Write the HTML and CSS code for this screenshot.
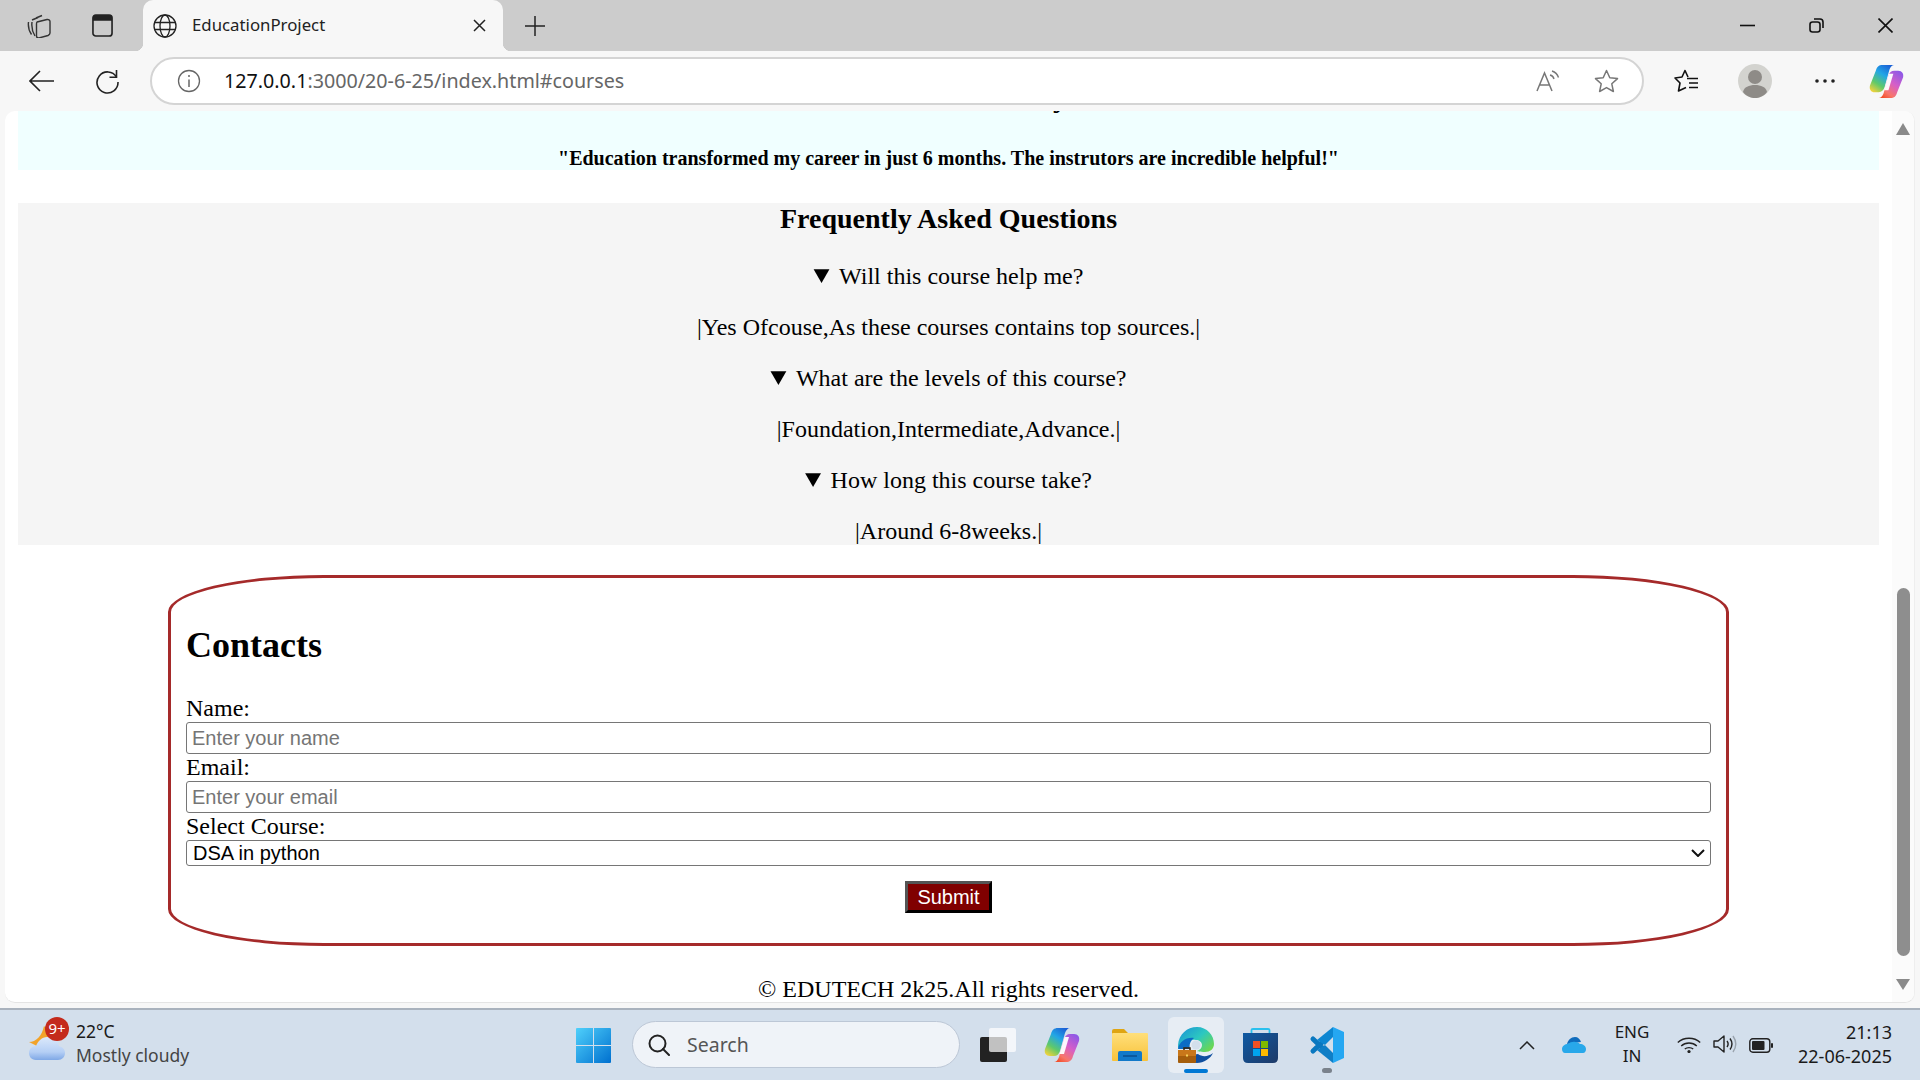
FILE: index.html
```html
<!DOCTYPE html>
<html lang="en">
<head>
<meta charset="utf-8">
<title>EducationProject</title>
<link rel="stylesheet" href="styles.css">
</head>
<body>
<svg class="defs" aria-hidden="true">
  <defs>
    <linearGradient id="cpA" x1="0.75" y1="0" x2="0.15" y2="1">
      <stop offset="0" stop-color="#1b62d6"/><stop offset="0.35" stop-color="#22a6e6"/><stop offset="0.7" stop-color="#5fc96a"/><stop offset="1" stop-color="#f2d23c"/>
    </linearGradient>
    <linearGradient id="cpB" x1="0.85" y1="0" x2="0.2" y2="1">
      <stop offset="0" stop-color="#8a58e8"/><stop offset="0.45" stop-color="#d65fc8"/><stop offset="0.8" stop-color="#f8766a"/><stop offset="1" stop-color="#f2502c"/>
    </linearGradient>
    <symbol id="copilot" viewBox="0 0 36 36">
      <path fill="url(#cpA)" d="M14 1H26C24 1 22 3 21 6L16 24C15 27 13 29 10 29H6C2 29 0 26 1 22L7 7C8 3 10 1 14 1Z"/>
      <path fill="url(#cpB)" d="M22 35H10C12 35 14 33 15 30L20 12C21 9 23 7 26 7H30C34 7 36 10 35 14L29 29C28 33 26 35 22 35Z"/>
      <path fill="#fff" d="M20.500 10H25L20 27H15.500Z" opacity=".95"/>
    </symbol>
  </defs>
</svg>

<header class="tabstrip">
  <svg class="ic ic-collections" viewBox="0 0 24 24" fill="none" stroke="#333" stroke-width="1.400"><path d="M9 4 15 1.500M5 6 11 3.500M1.500 8C1 12 2 17 4.500 20.500M5 8C4.500 12 5.500 18 8 22"/><path d="M10 8 20 5.500C21.500 5.200 23 6 23 7.500V19C23 20.500 22 21 21 21.500L12 24C10.500 24 9.500 23 9.500 22V10C9.500 9 9.500 8.300 10 8Z"/></svg>
  <svg class="ic ic-tabs" viewBox="0 0 22 24"><rect x="1" y="1" width="20" height="22" rx="3" fill="none" stroke="#222" stroke-width="1.700"/><path d="M1 4a3 3 0 0 1 3-3h14a3 3 0 0 1 3 3v3H1z" fill="#222"/></svg>
  <div class="tab">
    <svg class="ic ic-globe" viewBox="0 0 24 24" fill="none" stroke="#222" stroke-width="1.300"><circle cx="12" cy="12" r="11"/><ellipse cx="12" cy="12" rx="5" ry="11"/><path d="M1.500 8.500H22.500M1.500 15.500H22.500"/></svg>
    <span class="tab-title">EducationProject</span>
    <svg class="ic ic-tabclose" viewBox="0 0 13 13" fill="none" stroke="#222" stroke-width="1.500"><path d="M1 1 12 12M12 1 1 12"/></svg>
  </div>
  <svg class="ic ic-plus" viewBox="0 0 20 20" fill="none" stroke="#222" stroke-width="1.500"><path d="M10 0V20M0 10H20"/></svg>
  <div class="winctl">
    <svg class="ic ic-min" viewBox="0 0 15 15" fill="none" stroke="#111" stroke-width="1.600"><path d="M0 7.500H15"/></svg>
    <svg class="ic ic-restore" viewBox="0 0 15 15" fill="none" stroke="#111" stroke-width="1.600"><rect x="1" y="4" width="10" height="10" rx="2.500"/><path d="M5 1H11C13 1 14 2 14 4V10"/></svg>
    <svg class="ic ic-close" viewBox="0 0 15 15" fill="none" stroke="#111" stroke-width="1.600"><path d="M.5 .5 14.500 14.500M14.500 .5 .5 14.500"/></svg>
  </div>
</header>

<nav class="toolbar">
  <svg class="ic ic-back" viewBox="0 0 25 22" fill="none" stroke="#222" stroke-width="1.600"><path d="M25 11H1M11 1 1 11 11 21"/></svg>
  <svg class="ic ic-reload" viewBox="0 0 25 25" fill="none" stroke="#222" stroke-width="1.600"><path d="M21.500 8A10.500 10.500 0 1 0 23 13"/><path d="M21.500 1V8.200H14.500"/></svg>
  <div class="addressbar">
    <svg class="ic ic-info" viewBox="0 0 24 24" fill="none" stroke="#666" stroke-width="1.300"><circle cx="12" cy="12" r="10.500"/><path d="M12 10.500V18" stroke-width="1.500"/><circle cx="12" cy="7" r="1" fill="#666" stroke="none"/></svg>
    <span class="url"><span class="url-host">127.0.0.1</span>:3000/20-6-25/index.html#courses</span>
    <svg class="ic ic-read" viewBox="0 0 24 22" fill="none" stroke="#777" stroke-width="1.500"><path d="M1 21 8.500 3 16 21M4 15H13"/><path d="M14 5C16 5.500 17.500 7 18 9M16 1C19 2 21.500 4.500 22.500 7.500" stroke-width="1.400"/></svg>
    <svg class="ic ic-star" viewBox="0 0 25 24" fill="none" stroke="#777" stroke-width="1.500"><path d="M12.500 1.500 15.800 8.800 23.500 9.600 17.800 14.800 19.400 22.500 12.500 18.600 5.600 22.500 7.200 14.800 1.500 9.600 9.200 8.800Z" stroke-linejoin="round"/></svg>
  </div>
  <svg class="ic ic-favs" viewBox="0 0 24 24" fill="none" stroke="#111" stroke-width="1.600"><path d="M14 8 11 1.500 8 8 1 9 6 14 4.500 22 12 18.500" stroke-linejoin="round"/><path d="M13 9.500H24M15 14H24M15 18.500H24"/></svg>
  <svg class="ic ic-profile" viewBox="0 0 34 34"><circle cx="17" cy="17" r="17" fill="#d3d3cf"/><circle cx="17" cy="13" r="7" fill="#8e8b87"/><path d="M5 28C6 23 11 21 17 21S28 23 29 28C26 32 21 34 17 34S8 32 5 28Z" fill="#8e8b87"/></svg>
  <svg class="ic ic-dots" viewBox="0 0 20 4" fill="#222"><circle cx="2" cy="2" r="1.800"/><circle cx="10" cy="2" r="1.800"/><circle cx="18" cy="2" r="1.800"/></svg>
  <svg class="ic ic-copilot"><use href="#copilot"/></svg>
</nav>

<div class="page">
  <main class="content">
    <section class="testimonial">
      <h3 class="testimonial-title">Student Testimony</h3>
      <p class="quote">"Education transformed my career in just 6 months. The instrutors are incredible helpful!"</p>
    </section>

    <section class="faq">
      <h2 class="faq-title">Frequently Asked Questions</h2>
      <details open><summary>Will this course help me?</summary><p>|Yes Ofcouse,As these courses contains top sources.|</p></details>
      <details open><summary>What are the levels of this course?</summary><p>|Foundation,Intermediate,Advance.|</p></details>
      <details open><summary>How long this course take?</summary><p>|Around 6-8weeks.|</p></details>
    </section>

    <section class="contact">
      <h1 class="contact-title">Contacts</h1>
      <form class="contact-form">
        <label for="name">Name:</label>
        <input id="name" class="field" type="text" placeholder="Enter your name">
        <label for="email">Email:</label>
        <input id="email" class="field" type="email" placeholder="Enter your email">
        <label for="course">Select Course:</label>
        <div class="select-wrap">
          <select id="course" class="select"><option>DSA in python</option></select>
          <svg class="select-arrow" viewBox="0 0 14 8" fill="none" stroke="#111" stroke-width="2"><path d="M1 1 7 7 13 1"/></svg>
        </div>
        <button class="submit" type="button">Submit</button>
      </form>
    </section>

    <footer class="foot">© EDUTECH 2k25.All rights reserved.</footer>
  </main>
  <aside class="scrollbar">
    <span class="arrow-up"></span>
    <span class="thumb"></span>
    <span class="arrow-down"></span>
  </aside>
</div>

<footer class="taskbar">
  <div class="weather">
    <div class="weather-icon">
      <svg class="ic ic-cloud" viewBox="0 0 36 40">
        <defs><linearGradient id="cl" x1="0" y1="0" x2="0" y2="1"><stop offset="0" stop-color="#dce9fb"/><stop offset=".65" stop-color="#b5cff5"/><stop offset="1" stop-color="#7fa8e6"/></linearGradient></defs>
        <path d="M0 18C7 18 13 12 15 2 19 6 20 12 19 18L8 22Z" fill="#f2a32a"/>
        <path d="M7 36C2 36 0 32 0 29 0 25 3 22 7 22 9 17 13 13 18 13 25 13 29 17 30 22 33 23 36 25 36 29 36 33 33 36 29 36Z" fill="url(#cl)"/>
      </svg>
      <span class="badge">9+</span>
    </div>
    <div class="weather-text">
      <span class="temp">22°C</span>
      <span class="cond">Mostly cloudy</span>
    </div>
  </div>

  <div class="apps">
    <svg class="ic ic-win" viewBox="0 0 35 35">
      <defs><linearGradient id="wn" x1="0" y1="0" x2="1" y2="1"><stop offset="0" stop-color="#4fd0fb"/><stop offset="1" stop-color="#0070cf"/></linearGradient></defs>
      <path d="M1 0H17V17H0V1Q0 0 1 0ZM18 0H34Q35 0 35 1V17H18ZM0 18H17V35H1Q0 35 0 34ZM18 18H35V34Q35 35 34 35H18Z" fill="url(#wn)"/>
    </svg>
    <div class="search">
      <svg class="ic ic-search" viewBox="0 0 22 22" fill="none" stroke="#222" stroke-width="2"><circle cx="9.500" cy="9.500" r="8"/><path d="M15 15 21 21" stroke-linecap="round"/></svg>
      <span class="search-text">Search</span>
    </div>
    <svg class="ic ic-taskview" viewBox="0 0 36 34">
      <rect x="0" y="9" width="27" height="25" rx="2" fill="#222"/>
      <rect x="9" y="0" width="27" height="24" rx="2" fill="#fff" opacity=".72"/>
    </svg>
    <svg class="ic ic-copilot-task"><use href="#copilot"/></svg>
    <svg class="ic ic-folder" viewBox="0 0 36 32">
      <defs><linearGradient id="fd" x1="0" y1="0" x2="0" y2="1"><stop offset="0" stop-color="#ffdf7a"/><stop offset="1" stop-color="#f8c23a"/></linearGradient></defs>
      <path d="M0 2Q0 0 2 0H12L17 5H36V8H0Z" fill="#dfa513"/>
      <rect x="0" y="4" width="36" height="28" rx="1" fill="url(#fd)"/>
      <path d="M6 32V24Q6 22 8 22H28Q30 22 30 24V32Z" fill="#1279c9"/>
      <path d="M11 27H25" stroke="#0a4f8f" stroke-width="1.500"/>
    </svg>
    <div class="edge-slot">
      <svg class="ic ic-edge" viewBox="0 0 36 36">
        <defs>
          <linearGradient id="ed" x1="0" y1="0" x2="1" y2=".8"><stop offset="0" stop-color="#1a8fd8"/><stop offset=".55" stop-color="#2cc8c0"/><stop offset="1" stop-color="#6fd84c"/></linearGradient>
        </defs>
        <path d="M14 35C22 38 32 33 35 26 30 30 24 30 20 27 14 28 10 30 14 35Z" fill="#0f4f9f"/>
        <path d="M0 18C1 7 9 0 19 0 29 0 36 8 36 17 36 22 32 25 27 25 22 25 19 24 19 24 22 23 24 21 24 18 24 15 21 13 18 13 10 12 4 15 0 22Z" fill="url(#ed)"/>
        <path d="M0 22C1 15 8 10 16 11 12 14 11 18 12 22Z" fill="#0c6cc4"/>
        <circle cx="18" cy="18" r="4.500" fill="#d3dfec"/>
        <path d="M6 23V21H12V23" fill="none" stroke="#3a2208" stroke-width="1.500"/>
        <rect x="0" y="23" width="18" height="13" rx="1" fill="#a55e0c"/>
        <rect x="0" y="23" width="18" height="6" fill="#c8771a"/>
        <rect x="8" y="27.500" width="2" height="2" fill="#f6d25a"/>
      </svg>
      <span class="edge-indicator"></span>
    </div>
    <svg class="ic ic-store" viewBox="0 0 35 35">
      <defs><linearGradient id="st" x1="0" y1="0" x2="1" y2="1"><stop offset="0" stop-color="#0f5aa3"/><stop offset="1" stop-color="#1e3a68"/></linearGradient></defs>
      <path d="M8.500 6V2Q8.500 1 10 1H25Q26.500 1 26.500 2V6" fill="none" stroke="#2ac0ee" stroke-width="1.800"/>
      <path d="M0 5H35V30Q35 35 30 35H5Q0 35 0 30Z" fill="url(#st)"/>
      <rect x="10" y="13" width="7" height="7" fill="#f25022"/><rect x="18" y="13" width="7" height="7" fill="#7fba00"/>
      <rect x="10" y="21" width="7" height="7" fill="#00a4ef"/><rect x="18" y="21" width="7" height="7" fill="#ffb900"/>
    </svg>
    <div class="vscode-slot">
      <svg class="ic ic-vscode" viewBox="0 0 36 36">
        <path d="M26 4 5 24M26 32 5 12" stroke="#0a78c0" stroke-width="5" stroke-linecap="round" fill="none"/>
        <path d="M25 0 36 5V31L25 36Z" fill="#25a7f2"/>
        <path d="M25 0V10L17 18 9 13 25 0Z" fill="#0d86d1"/>
        <path d="M25 36V26L17 18 9 23 25 36Z" fill="#0f7ec6"/>
      </svg>
      <span class="vscode-dot"></span>
    </div>
  </div>

  <div class="tray">
    <svg class="ic ic-chev" viewBox="0 0 16 9" fill="none" stroke="#222" stroke-width="1.500"><path d="M1 8 8 1 15 8"/></svg>
    <svg class="ic ic-onedrive" viewBox="0 0 24 16">
      <path d="M5 7C6 3 9 0 13 0 16 0 18 2 19 5Z" fill="#0f6cbd"/>
      <path d="M3 16C1 16 0 14 0 12 0 9 3 7 6 7 9 4 15 4 18 7 21 7 24 9 24 12 24 14 23 16 21 16Z" fill="#28a8ea"/>
    </svg>
    <div class="lang"><span>ENG</span><span>IN</span></div>
    <svg class="ic ic-wifi" viewBox="0 0 24 17" fill="none" stroke="#222" stroke-width="1.400"><path d="M.8 6.500C7 .8 17 .8 23.200 6.500M4.200 10C8.500 6 15.500 6 19.800 10M7.800 13C10 11.200 14 11.200 16.200 13"/><circle cx="12" cy="15.500" r="1.600" fill="#222" stroke="none"/></svg>
    <svg class="ic ic-volume" viewBox="0 0 24 18" fill="none" stroke="#222" stroke-width="1.400"><path d="M1 6V12H5L11 17V1L5 6Z" stroke-linejoin="round"/><path d="M14 6C15.500 8 15.500 10 14 12M17 3.500C19.500 7 19.500 11 17 14.500"/><path d="M20 1C23.500 6 23.500 12 20 17" stroke="#9aa3ad"/></svg>
    <svg class="ic ic-battery" viewBox="0 0 24 15"><rect x=".8" y=".8" width="20" height="13.400" rx="3" fill="none" stroke="#222" stroke-width="1.400"/><rect x="3" y="3" width="12.500" height="9" rx="1" fill="#222"/><rect x="22" y="5" width="2" height="5" rx="1" fill="#222"/></svg>
    <div class="clock"><span>21:13</span><span>22-06-2025</span></div>
  </div>
</footer>
</body>
</html>
```
FILE: styles.css
```css
* { box-sizing: border-box; }
html, body { margin: 0; height: 100%; }
body {
  width: 1920px;
  height: 1080px;
  overflow: hidden;
  display: flex;
  flex-direction: column;
  background: #f7f7f7;
  font-family: "Noto Sans", sans-serif;
  color: #111;
}
.defs { display: block; width: 0; height: 0; flex: none; }
.ic { display: block; flex: none; }

/* tab strip */
.tabstrip { flex: none; height: 51px; background: #ccc; display: flex; align-items: center; padding-left: 27px; }
.ic-collections { width: 24px; height: 24px; }
.ic-tabs { width: 21px; height: 23px; margin-left: 41px; }
.tab {
  position: relative;
  width: 360px; height: 51px; margin: 0 0 0 30px;
  background: #f7f7f7; border-radius: 10px 10px 0 0;
  display: flex; align-items: center; padding: 0 17px 0 10px;
}
.tab::before, .tab::after { content: ""; position: absolute; bottom: 0; width: 8px; height: 8px; }
.tab::before { left: -8px; background: radial-gradient(circle at 0 0, transparent 8px, #f7f7f7 8.5px); }
.tab::after { right: -8px; background: radial-gradient(circle at 100% 0, transparent 8px, #f7f7f7 8.5px); }
.ic-globe { width: 24px; height: 24px; }
.tab-title { margin-left: 15px; font-size: 16.800px; line-height: 24px; margin-top: -2px; color: #222; flex: 1; }
.ic-tabclose { width: 13px; height: 13px; }
.ic-plus { width: 20px; height: 20px; margin-left: 22px; }
.winctl { margin-left: auto; display: flex; align-items: center; padding-right: 27px; }
.ic-min, .ic-restore, .ic-close { width: 15px; height: 15px; }
.ic-restore, .ic-close { margin-left: 54px; }

/* toolbar */
.toolbar { flex: none; height: 60px; background: #f7f7f7; display: flex; align-items: center; padding-left: 29px; }
.ic-back { width: 25px; height: 22px; }
.ic-reload { width: 25px; height: 25px; margin-left: 41px; }
.addressbar {
  width: 1494px; height: 48px; margin-left: 30px; margin-right: -1px;
  background: #fff; border: 2px solid #d4d4d4; border-radius: 24px;
  display: flex; align-items: center; padding-left: 25px; padding-right: 1px;
}
.ic-info { width: 24px; height: 24px; }
.url { margin-left: 23px; font-size: 19.700px; line-height: 26px; color: #666; flex: 1; }
.url-host { color: #111; }
.ic-read { width: 24px; height: 22px; }
.ic-star { width: 25px; height: 24px; margin: 0 22px 0 34px; }
.ic-favs { width: 24px; height: 24px; margin-left: 31px; }
.ic-profile { width: 34px; height: 34px; margin-left: 40px; }
.ic-dots { width: 20px; height: 4px; margin-left: 43px; }
.ic-copilot { width: 35px; height: 35px; margin-left: 34px; }

/* page */
.page {
  flex: none; height: 892px; margin: 0 5px; background: #fff;
  border-radius: 10px; border-bottom: 1px solid #e4e4e4; border-right: 1px solid #eee;
  display: flex; overflow: hidden;
}
.content {
  flex: 1; min-width: 0; padding: 0 13px; overflow: hidden;
  font-family: "Liberation Serif", "Times New Roman", serif; font-size: 24px; color: #000;
}
.testimonial { margin-top: -30px; height: 89px; background: #f0ffff; text-align: center; }
.testimonial-title { margin: 0; font-size: 30px; line-height: 32px; font-weight: bold; }
.quote { margin: 34px 0 0; font-size: 20px; line-height: 23px; font-weight: bold; }

.faq { margin-top: 33px; background: #f5f5f5; text-align: center; height: 342px; }
.faq-title { margin: 0 0 28px; font-size: 28px; line-height: 32px; }
.faq details p { margin: 24px 0; }
.faq summary { cursor: pointer; }

.contact {
  width: 1561px; height: 371px; margin: 30px auto 0;
  border: 3px solid #a52a2a; border-radius: 10%;
  padding: 0 15px;
}
.contact-title { margin: 47px 0 29px; font-size: 36px; line-height: 41px; }
.contact-form { display: flex; flex-direction: column; align-items: stretch; }
.contact-form label { display: block; line-height: 27px; }
.field {
  display: block; height: 32px; padding: 1px 5px;
  border: 1px solid #767676; border-radius: 3px;
  font-family: "Liberation Sans", Arial, sans-serif; font-size: 20px;
}
.select-wrap { position: relative; }
.select {
  display: block; width: 100%; height: 26px; padding: 0 6px;
  appearance: none; -webkit-appearance: none;
  border: 1px solid #767676; border-radius: 3px; background: #fff;
  font-family: "Liberation Sans", Arial, sans-serif; font-size: 20px; color: #000;
}
.select-arrow { position: absolute; right: 6px; top: 9px; width: 14px; height: 8px; pointer-events: none; }
.submit {
  align-self: center; margin-top: 15px; height: 32px; padding: 0 9px;
  border: 3px outset #000; background: #800000; color: #fff;
  font-family: "Liberation Sans", Arial, sans-serif; font-size: 20px;
}
.foot { margin-top: 30px; text-align: center; line-height: 27.600px; }

/* scrollbar */
.scrollbar { flex: none; width: 22px; background: #fbfbfb; display: flex; flex-direction: column; align-items: center; padding-top: 12px; }
.arrow-up { width: 0; height: 0; border-left: 7.500px solid transparent; border-right: 7.500px solid transparent; border-bottom: 12px solid #8a8a8a; }
.thumb { width: 13px; height: 368px; margin-top: 453px; background: #8e8e8e; border-radius: 7px; }
.arrow-down { width: 0; height: 0; margin-top: 23px; border-left: 7.500px solid transparent; border-right: 7.500px solid transparent; border-top: 11px solid #8a8a8a; }

/* taskbar */
.taskbar {
  flex: none; height: 72px; margin-top: 5px;
  background: #d3dfec; border-top: 2px solid #a9b2bd;
  display: flex; align-items: center; padding-left: 29px;
}
.weather { width: 547px; display: flex; align-items: center; flex: none; height: 70px; }
.weather-icon { position: relative; width: 36px; height: 40px; margin-top: -2px; }
.ic-cloud { width: 36px; height: 40px; }
.badge {
  position: absolute; left: 16px; top: -7px; width: 24px; height: 24px; border-radius: 50%;
  background: #c42b1c; color: #fff; font-size: 15px; line-height: 23px; text-align: center;
}
.weather-text { margin-left: 11px; margin-top: -4px; display: flex; flex-direction: column; font-size: 17.500px; line-height: 24px; }
.temp { color: #1a1a1a; }
.cond { color: #444; }

.apps { display: flex; align-items: center; flex: none; height: 70px; }
.ic-win { width: 35px; height: 35px; }
.search {
  width: 328px; height: 47px; margin-left: 21px; margin-top: -1px;
  background: #eff3f8; border: 1px solid #bcc7d6; border-radius: 24px;
  display: flex; align-items: center; padding-left: 15px;
}
.ic-search { width: 22px; height: 22px; }
.search-text { margin-left: 17px; margin-top: -1px; font-size: 19.500px; color: #555; }
.ic-taskview { width: 36px; height: 34px; margin-left: 20px; }
.ic-copilot-task { width: 36px; height: 36px; margin-left: 28px; }
.ic-folder { width: 36px; height: 32px; margin-left: 32px; }
.edge-slot {
  position: relative; width: 56px; height: 56px; margin-left: 20px;
  background: rgba(255,255,255,.45); border-radius: 6px;
  display: flex; align-items: center; justify-content: center;
}
.ic-edge { width: 36px; height: 36px; }
.edge-indicator { position: absolute; left: 16px; bottom: 0; width: 24px; height: 4px; border-radius: 2px; background: #0078d4; }
.ic-store { width: 35px; height: 35px; margin-left: 19px; }
.vscode-slot { position: relative; width: 36px; height: 36px; margin-left: 30px; }
.ic-vscode { width: 36px; height: 36px; }
.vscode-dot { position: absolute; left: 14px; top: 41px; width: 10px; height: 5px; border-radius: 3px; background: #7a828c; }

.tray { display: flex; align-items: center; flex: 1; height: 70px; padding-left: 175px; }
.ic-chev { width: 16px; height: 9px; }
.ic-onedrive { width: 24px; height: 16px; margin-left: 27px; }
.lang { width: 36px; margin-left: 28px; margin-top: -2px; display: flex; flex-direction: column; align-items: center; font-size: 17px; line-height: 24px; color: #1a1a1a; }
.ic-wifi { width: 24px; height: 17px; margin-left: 27px; margin-top: -2px; }
.ic-volume { width: 24px; height: 18px; margin-left: 12px; margin-top: -2px; }
.ic-battery { width: 24px; height: 15px; margin-left: 12px; }
.clock { margin-left: 26px; margin-top: -2px; width: 93px; display: flex; flex-direction: column; align-items: flex-end; font-size: 18px; line-height: 24px; color: #1a1a1a; white-space: nowrap; }
```
